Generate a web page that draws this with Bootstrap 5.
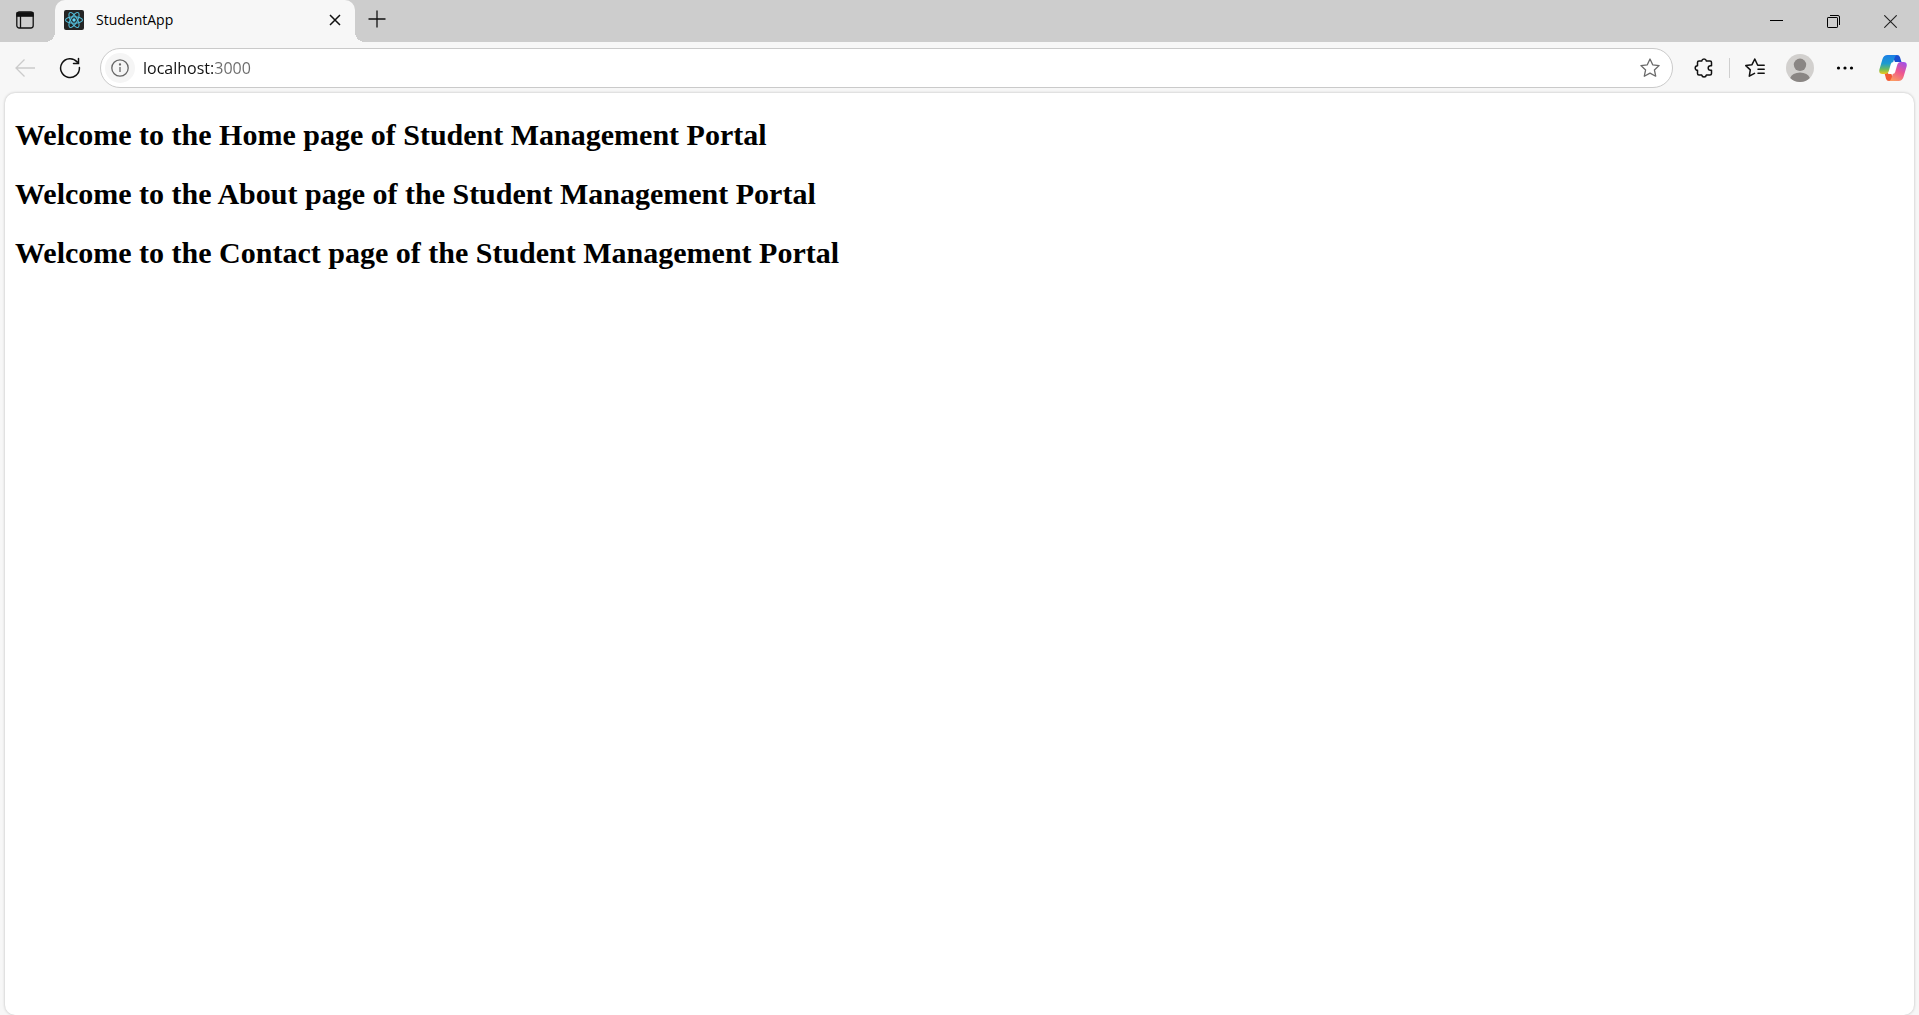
<!DOCTYPE html>
<html lang="en">
<head>
<meta charset="utf-8">
<meta name="viewport" content="width=device-width, initial-scale=1">
<title>StudentApp</title>
<link href="https://cdn.jsdelivr.net/npm/bootstrap@5.3.0/dist/css/bootstrap.min.css" rel="stylesheet">
<style>
  :root { --strip: #cdcdcd; --chrome: #f7f7f7; }
  body { background: var(--chrome); color: #000; font-family: "Open Sans", "Noto Sans", sans-serif; }
  svg { display: block; flex: none; }
  .tab-strip { background: var(--strip); height: 42px; }
  .flat-btn { border: 0; background: transparent; padding: 0; color: #111; display: flex; align-items: center; justify-content: center; flex: none; border-radius: 4px; }
  .strip-lead { width: 50px; height: 40px; margin-right: 5px; }
  .browser-tab { width: 300px; background: var(--chrome); border-radius: 10px 10px 0 0; padding: 0 8px 2px 9px; height: 42px; }
  .browser-tab::before, .browser-tab::after { content: ""; position: absolute; bottom: 0; width: 10px; height: 10px; }
  .browser-tab::before { right: 100%; background: radial-gradient(circle at 0 0, transparent 10px, var(--chrome) 10px); }
  .browser-tab::after { left: 100%; background: radial-gradient(circle at 100% 0, transparent 10px, var(--chrome) 10px); }
  .tab-name { font-size: 14px; line-height: 20px; margin-left: 12px; }
  .tab-close { width: 24px; height: 24px; }
  .tab-new { width: 32px; height: 32px; margin: 3px 0 0 6px; }
  .win-btn { width: 57px; height: 42px; border-radius: 0; }
  .tool-row { height: 51px; padding: 0 8px 0 7px; }
  .tool-btn { width: 36px; height: 36px; }
  .tool-group { gap: 9px; }
  .copilot-btn { margin-left: 12px; }
  .address { height: 40px; border: 1px solid #cacaca; border-radius: 20px; background: #fff; padding: 0 4px; margin: 0 13px 0 12px; min-width: 0; }
  .site-info { width: 30px; height: 30px; border-radius: 50%; background: #f5f5f5; color: #666; }
  .url-field { font-size: 16px; line-height: 24px; color: #1a1a1a; border: 0; padding: 0; margin-left: 8px; min-width: 0; outline: 0;
    background: linear-gradient(90deg, #111 72px, #6b6b6b 72px); -webkit-background-clip: text; background-clip: text; -webkit-text-fill-color: transparent; }
  .tool-rule { width: 1px; height: 20px; background: #cfcfcf; margin: 0 7px; }
  .viewport-pane { background: #fff; margin: 0 5px; padding: 25px 10px; border-radius: 10px; box-shadow: 0 0 3px rgba(0,0,0,.25); }
  .viewport-pane h1 { font-family: "Liberation Serif", serif; font-size: 30px; line-height: 34px; font-weight: 700; margin: 0 0 25px; }
</style>
<script src="https://cdn.jsdelivr.net/npm/bootstrap@5.3.0/dist/js/bootstrap.bundle.min.js"></script>
</head>
<body class="d-flex flex-column min-vh-100">
<header>
  <div class="tab-strip d-flex">
    <button class="flat-btn strip-lead" type="button" aria-label="Tab actions">
      <svg width="18" height="18" viewBox="0 0 18 18" fill="none" stroke="currentColor" stroke-width="1.3"><rect x=".8" y="1" width="16.4" height="16" rx="2.5"/><path d="M1 1.8h16v3.4H1z" fill="currentColor"/><path d="M4.5 5v12"/></svg>
    </button>
    <div class="browser-tab position-relative d-flex align-items-center">
      <svg width="20" height="20" viewBox="0 0 20 20"><rect width="20" height="20" rx="2" fill="#242424"/><g fill="none" stroke="#53bdd9" stroke-width="1.1"><ellipse cx="10" cy="10" rx="8.5" ry="3.3"/><ellipse cx="10" cy="10" rx="8.5" ry="3.3" transform="rotate(60 10 10)"/><ellipse cx="10" cy="10" rx="8.5" ry="3.3" transform="rotate(120 10 10)"/></g><circle cx="10" cy="10" r="1.7" fill="#61dafb"/></svg>
      <span class="tab-name flex-grow-1">StudentApp</span>
      <button class="flat-btn tab-close" type="button" aria-label="Close tab"><svg width="12" height="12" viewBox="0 0 12 12" stroke="currentColor" stroke-width="1.5"><path d="M1 1l10 10M11 1L1 11"/></svg></button>
    </div>
    <button class="flat-btn tab-new" type="button" aria-label="New tab"><svg width="18" height="18" viewBox="0 0 18 18" stroke="currentColor" stroke-width="1.3"><path d="M9 .5v17M.5 9h17"/></svg></button>
    <div class="d-flex ms-auto">
      <button class="flat-btn win-btn" type="button" aria-label="Minimize"><svg width="13" height="13" viewBox="0 0 13 13" stroke="#000"><path d="M0 5.5h13"/></svg></button>
      <button class="flat-btn win-btn" type="button" aria-label="Restore"><svg width="13" height="13" viewBox="0 0 13 13" fill="none" stroke="#000"><rect x=".5" y="2.5" width="10" height="10" rx=".6"/><path d="M3 .5h8q1.5 0 1.5 1.5v8"/></svg></button>
      <button class="flat-btn win-btn" type="button" aria-label="Close window"><svg width="13" height="13" viewBox="0 0 13 13" stroke="#222" stroke-width="1.1"><path d="M.3.3l12.4 12.4M12.7.3L.3 12.7"/></svg></button>
    </div>
  </div>
  <div class="tool-row d-flex align-items-center">
    <div class="tool-group d-flex align-items-center">
      <button class="flat-btn tool-btn" type="button" aria-label="Back" disabled><svg width="20" height="20" viewBox="0 0 20 20" fill="none" stroke="#cbcbcb" stroke-width="1.3"><path d="M20 10H1M9.5 1.5L1 10l8.5 8.5"/></svg></button>
      <button class="flat-btn tool-btn" type="button" aria-label="Refresh"><svg width="22" height="22" viewBox="0 0 22 22" fill="none" stroke="currentColor" stroke-width="1.5" stroke-linecap="round"><path d="M20.4 10.5A9.4 9.4 0 1 1 18.2 5M19.5 1.5v5h-5"/></svg></button>
    </div>
    <form class="address d-flex align-items-center flex-grow-1">
      <button class="flat-btn site-info" type="button" aria-label="Site information"><svg width="18" height="18" viewBox="0 0 18 18" fill="none" stroke="currentColor" stroke-width="1.3"><circle cx="9" cy="9" r="8.2"/><path d="M9 8v5"/><circle cx="9" cy="5.5" r=".5" fill="currentColor"/></svg></button>
      <input class="url-field flex-grow-1" type="text" aria-label="Address" value="localhost:3000">
      <button class="flat-btn tool-btn" type="button" aria-label="Add to favorites"><svg width="20" height="20" viewBox="0 0 20 20" fill="none" stroke="#6a6a6a" stroke-width="1.3" stroke-linejoin="round"><path d="M10 1l2.7 5.8 6.4.8-4.7 4.3 1.3 6.3L10 15.1l-5.7 3.1 1.3-6.3L.9 7.6l6.4-.8z"/></svg></button>
    </form>
    <button class="flat-btn tool-btn" type="button" aria-label="Extensions"><svg width="20" height="20" viewBox="0 0 20 20" fill="none" stroke="currentColor" stroke-width="1.5" stroke-linejoin="round"><path d="M5 3h2.700a2.400 2.400 0 0 1 4.700 0H16q1.500 0 1.500 1.500v3.200h-1a2.300 2.300 0 0 0 0 4.600h1v3.200q0 1.500-1.500 1.500h-3.600a2.400 2.400 0 0 1-4.700 0H5q-1.500 0-1.500-1.500v-3.200a2.300 2.300 0 0 1 0-4.600V4.500Q3.500 3 5 3z"/></svg></button>
    <span class="tool-rule"></span>
    <div class="tool-group d-flex align-items-center">
      <button class="flat-btn tool-btn" type="button" aria-label="Favorites"><svg width="20" height="20" viewBox="0 0 20 20" fill="none" stroke="currentColor" stroke-width="1.5" stroke-linejoin="round" stroke-linecap="round"><path d="M19.2 7.3h-6.500L9.800 1 7 6.700l-6.200.9 4.500 4.300-1 6.300 5.200-2.800M13 11.300h6.200M13 15.300h6.200"/></svg></button>
      <button class="flat-btn tool-btn" type="button" aria-label="Profile"><svg width="28" height="28" viewBox="0 0 28 28"><circle cx="14" cy="14" r="14" fill="#d2d0ce"/><circle cx="14" cy="10.8" r="6.2" fill="#8a8684"/><path d="M4.2 24a10 7 0 0 1 19.6 0A14 14 0 0 1 4.2 24z" fill="#8a8684"/></svg></button>
      <button class="flat-btn tool-btn" type="button" aria-label="Settings and more"><svg width="18" height="4" viewBox="0 0 18 4" fill="#000"><circle cx="2.5" cy="2" r="1.6"/><circle cx="9" cy="2" r="1.6"/><circle cx="15.5" cy="2" r="1.6"/></svg></button>
    </div>
    <button class="flat-btn tool-btn copilot-btn" type="button" aria-label="Copilot">
      <svg width="28" height="28" viewBox="0 0 28 28">
        <defs>
          <linearGradient id="ca" x1="0" y1="0" x2="0" y2="1"><stop offset="0" stop-color="#1b7fe6"/><stop offset=".45" stop-color="#1d9bd0"/><stop offset=".75" stop-color="#6dbb5e"/><stop offset="1" stop-color="#efc81a"/></linearGradient>
          <linearGradient id="cb" x1=".8" y1="0" x2=".3" y2="1"><stop offset="0" stop-color="#a251e6"/><stop offset=".5" stop-color="#ee568f"/><stop offset="1" stop-color="#fb9a62"/></linearGradient>
        </defs>
        <path d="M13 1h5q2.4 0 3 2.2L22.5 8H16z" fill="#1b4fd0"/>
        <path d="M15 27h-5q-2.400 0-3-2.200L5.500 19H12z" fill="#f25a35"/>
        <path d="M12 9.500L15.500 8H19l-3.500 10.500L13 20H9z" fill="#fff"/>
        <path d="M8.500 1H18q-1.700.6-2.500 3L14.200 8q-1.800.2-2.400 2L9.800 17q-.9 3-3.600 3H3.500Q-.6 20 .4 15.500L3.500 5Q4.800 1 8.500 1z" fill="url(#ca)"/>
        <path d="M19.500 27H10q1.700-.6 2.500-3l1.300-4q1.800-.2 2.400-2l2-7q.9-3 3.600-3h2.700q4.100 0 3.100 4.500L24.500 23q-1.300 4-5 4z" fill="url(#cb)"/>
      </svg>
    </button>
  </div>
</header>
<main class="viewport-pane flex-grow-1">
  <h1>Welcome to the Home page of Student Management Portal</h1>
  <h1>Welcome to the About page of the Student Management Portal</h1>
  <h1>Welcome to the Contact page of the Student Management Portal</h1>
</main>
</body>
</html>
